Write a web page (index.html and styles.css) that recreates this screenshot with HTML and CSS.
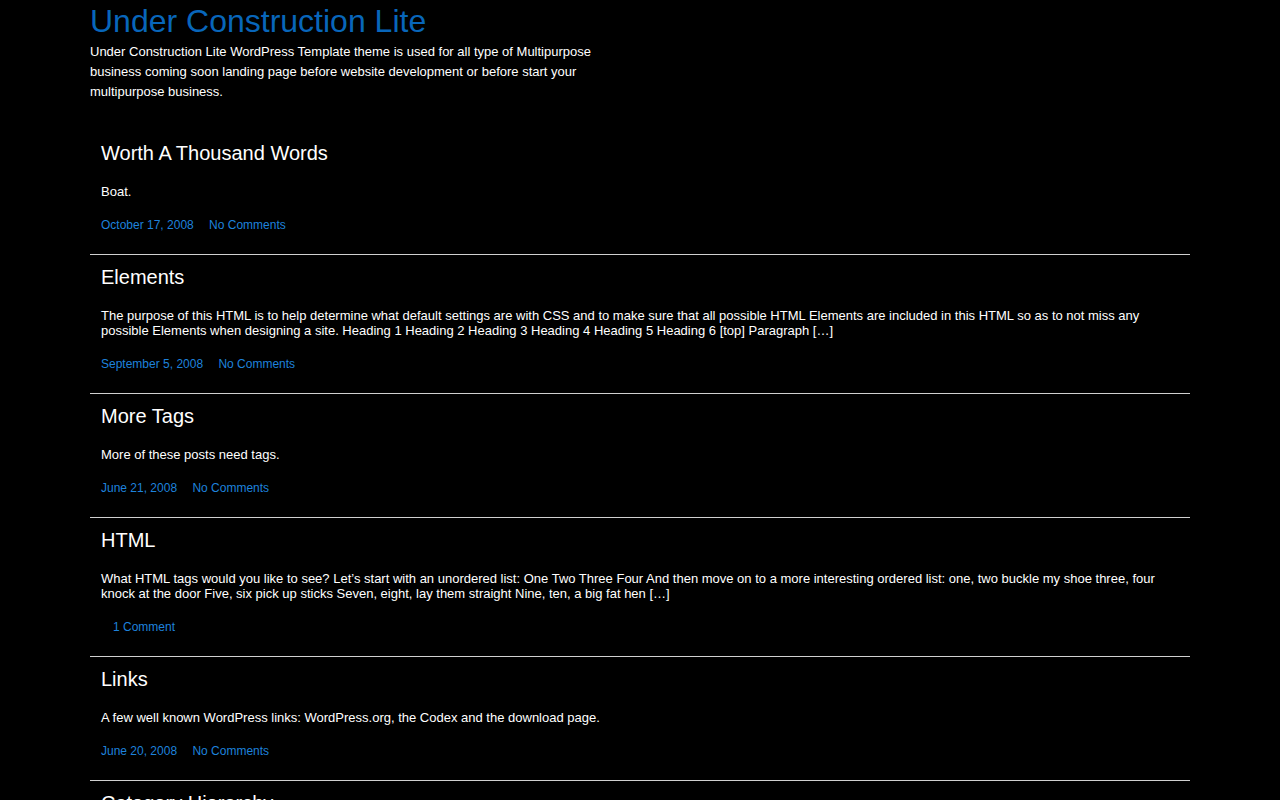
FILE: index.html
```html
<!DOCTYPE html>
<html lang="en">
<head>
<meta charset="utf-8">
<title>Under Construction Lite</title>
<link rel="stylesheet" href="styles.css">
</head>
<body>
<div class="wrap">
  <header class="site-header">
    <h1 class="site-title"><a href="#">Under Construction Lite</a></h1>
    <p class="site-desc">Under Construction Lite WordPress Template theme is used for all type of Multipurpose business coming soon landing page before website development or before start your multipurpose business.</p>
  </header>
  <main class="posts">
    <article class="post">
      <h2 class="post-title">Worth A Thousand Words</h2>
      <p class="post-text">Boat.</p>
      <div class="meta"><a class="date" href="#">October 17, 2008</a> <a href="#">No Comments</a></div>
    </article>
    <article class="post">
      <h2 class="post-title">Elements</h2>
      <p class="post-text">The purpose of this HTML is to help determine what default settings are with CSS and to make sure that all possible HTML Elements are included in this HTML so as to not miss any possible Elements when designing a site. Heading 1 Heading 2 Heading 3 Heading 4 Heading 5 Heading 6 [top] Paragraph […]</p>
      <div class="meta"><a class="date" href="#">September 5, 2008</a> <a href="#">No Comments</a></div>
    </article>
    <article class="post">
      <h2 class="post-title">More Tags</h2>
      <p class="post-text">More of these posts need tags.</p>
      <div class="meta"><a class="date" href="#">June 21, 2008</a> <a href="#">No Comments</a></div>
    </article>
    <article class="post">
      <h2 class="post-title">HTML</h2>
      <p class="post-text">What HTML tags would you like to see? Let’s start with an unordered list: One Two Three Four And then move on to a more interesting ordered list: one, two buckle my shoe three, four knock at the door Five, six pick up sticks Seven, eight, lay them straight Nine, ten, a big fat hen […]</p>
      <div class="meta"><a class="date" href="#"></a><a href="#">1 Comment</a></div>
    </article>
    <article class="post">
      <h2 class="post-title">Links</h2>
      <p class="post-text">A few well known WordPress links: WordPress.org, the Codex and the download page.</p>
      <div class="meta"><a class="date" href="#">June 20, 2008</a> <a href="#">No Comments</a></div>
    </article>
    <article class="post">
      <h2 class="post-title">Category Hierarchy</h2>
      <p class="post-text">Parent Child Grandchild</p>
      <div class="meta"><a class="date" href="#">June 19, 2008</a> <a href="#">No Comments</a></div>
    </article>
  </main>
</div>
</body>
</html>
```
FILE: styles.css
```css
html, body {
  margin: 0;
  padding: 0;
  background: #000;
  color: #fff;
  font-family: "Liberation Sans", Arial, sans-serif;
}
.wrap {
  width: 1100px;
  margin: 0 0 0 90px;
}
.site-header {
  padding-top: 3px;
}
.site-title {
  margin: 0;
  font-size: 32px;
  font-weight: normal;
  line-height: 37px;
}
.site-title a {
  color: #0866ba;
  text-decoration: none;
}
.site-desc {
  margin: 2px 0 0;
  width: 550px;
  font-size: 13px;
  line-height: 20px;
  color: #fff;
}
.posts {
  margin-top: 29px;
}
.post {
  padding: 10px 11px 21px;
  border-bottom: 1px solid #d0d0d0;
}
.post-title {
  margin: 0;
  font-size: 20px;
  font-weight: normal;
  line-height: 24px;
  color: #fff;
}
.post-text {
  margin: 19px 0 0;
  font-size: 13px;
  line-height: 15px;
  color: #fff;
}
.meta {
  margin-top: 19px;
  font-size: 12px;
  line-height: 15px;
}
.meta a {
  color: #1e82dc;
  text-decoration: none;
}
.meta .date {
  margin-right: 12px;
}
```
